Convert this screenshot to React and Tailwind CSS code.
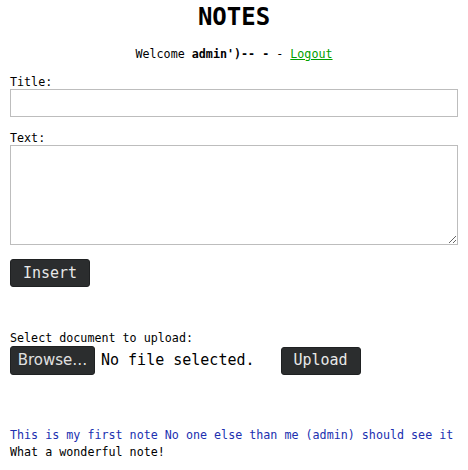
import React from "react";

const DarkButton = ({ children, className = "" }) => (
  <button
    className={`h-[28px] rounded-[3px] border border-[#1f2122] bg-[#2b2d2e] text-[15px] text-[#e8e8e8] ${className}`}
  >
    {children}
  </button>
);

export default function App() {
  return (
    <div className="bg-white px-[10px] text-[11.7px] text-black font-['DejaVu_Sans_Mono',monospace]">
      <h1 className="pt-[4px] text-center text-[24px] font-bold leading-[26px]">NOTES</h1>

      <p className="mt-[17px] text-center leading-[14px]">
        Welcome <b>admin')-- -</b> - <a href="#" className="text-[#00a000] underline">Logout</a>
      </p>

      <form className="mt-[14px]">
        <label className="block leading-[14px]">Title:</label>
        <input type="text" className="block h-[28px] w-full border border-[#bdbdbd] bg-white" />

        <label className="mt-[14px] block leading-[14px]">Text:</label>
        <textarea className="block h-[100px] w-full resize-y border border-[#bdbdbd] bg-white" />

        <DarkButton className="mt-[14px] w-[80px]">Insert</DarkButton>
      </form>

      <div className="mt-[44px]">
        <p className="leading-[15px]">Select document to upload:</p>
        <div className="flex items-center">
          <span className="flex h-[29px] w-[85px] items-center justify-center rounded-[3px] border border-[#1f2122] bg-[#2b2d2e] font-['DejaVu_Sans',sans-serif] text-[15px] text-[#e0e0e0]">
            Browse…
          </span>
          <span className="ml-[6px] text-[15px]">No file selected.</span>
          <DarkButton className="ml-[26px] w-[80px]">Upload</DarkButton>
        </div>
      </div>

      <div className="mt-[52px] leading-[17px]">
        <p className="text-[#2030b0]">This is my first note No one else than me (admin) should see it</p>
        <p>What a wonderful note!</p>
      </div>
    </div>
  );
}
